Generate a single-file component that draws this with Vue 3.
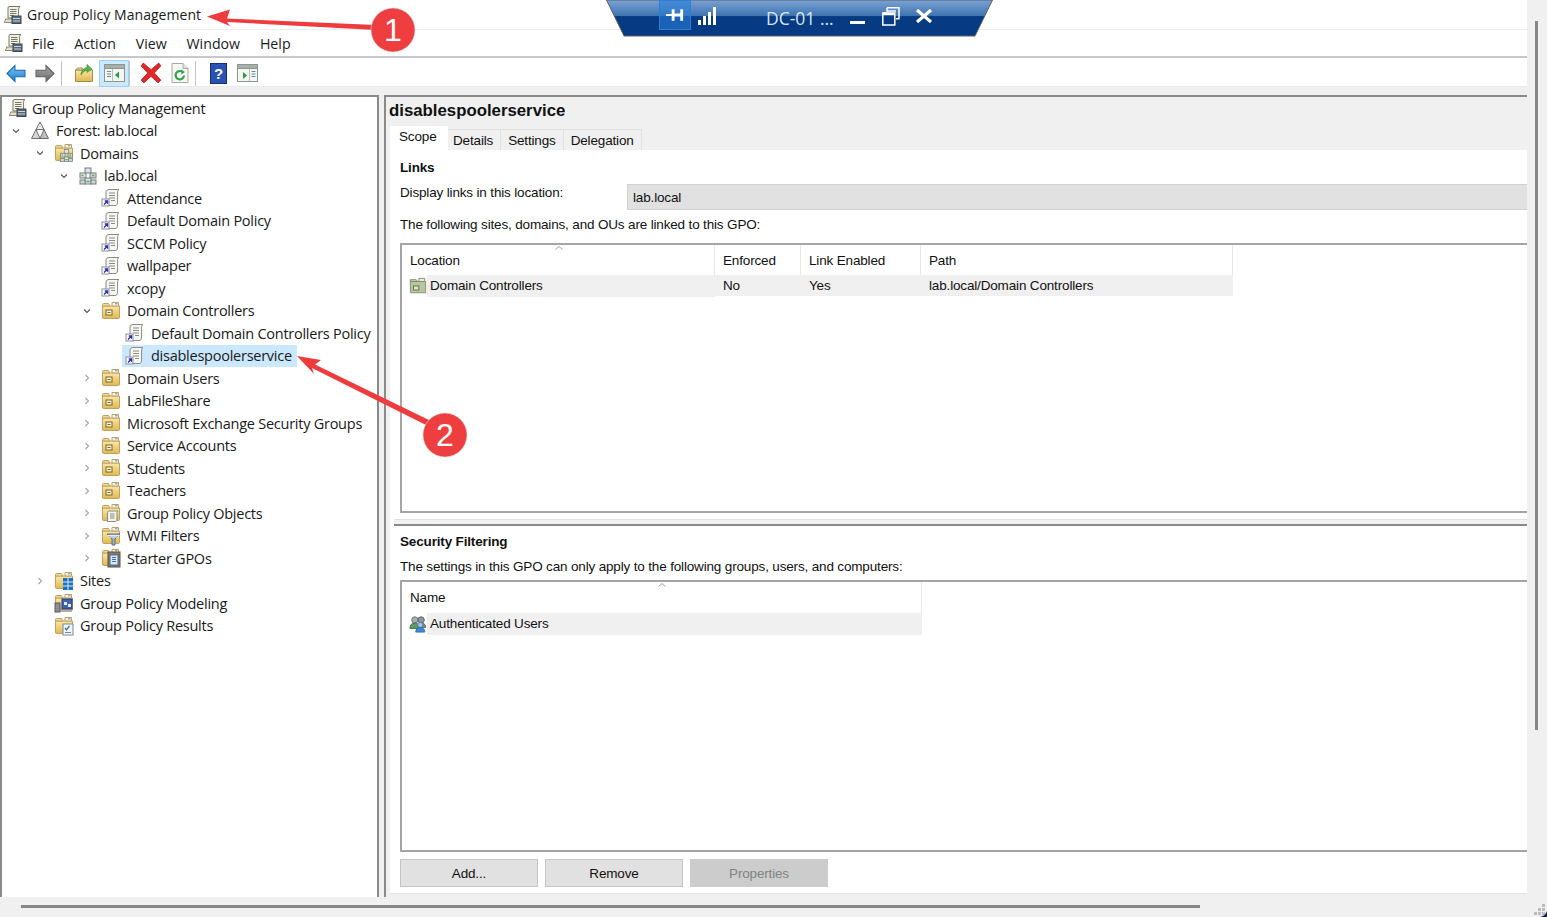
<script setup>
const menus = ["File", "Action", "View", "Window", "Help"];

const tree = [
  { level: 0, icon: "gpmc", label: "Group Policy Management" },
  { level: 1, chevron: "open", icon: "forest", label: "Forest: lab.local" },
  { level: 2, chevron: "open", icon: "domains", label: "Domains" },
  { level: 3, chevron: "open", icon: "domain", label: "lab.local" },
  { level: 4, icon: "gpo", label: "Attendance" },
  { level: 4, icon: "gpo", label: "Default Domain Policy" },
  { level: 4, icon: "gpo", label: "SCCM Policy" },
  { level: 4, icon: "gpo", label: "wallpaper" },
  { level: 4, icon: "gpo", label: "xcopy" },
  { level: 4, chevron: "open", icon: "ou", label: "Domain Controllers" },
  { level: 5, icon: "gpo", label: "Default Domain Controllers Policy" },
  { level: 5, icon: "gpo", label: "disablespoolerservice", selected: true },
  { level: 4, chevron: "closed", icon: "ou", label: "Domain Users" },
  { level: 4, chevron: "closed", icon: "ou", label: "LabFileShare" },
  { level: 4, chevron: "closed", icon: "ou", label: "Microsoft Exchange Security Groups" },
  { level: 4, chevron: "closed", icon: "ou", label: "Service Accounts" },
  { level: 4, chevron: "closed", icon: "ou", label: "Students" },
  { level: 4, chevron: "closed", icon: "ou", label: "Teachers" },
  { level: 4, chevron: "closed", icon: "gpofolder", label: "Group Policy Objects" },
  { level: 4, chevron: "closed", icon: "wmi", label: "WMI Filters" },
  { level: 4, chevron: "closed", icon: "starter", label: "Starter GPOs" },
  { level: 2, chevron: "closed", icon: "sites", label: "Sites" },
  { level: 2, icon: "modeling", label: "Group Policy Modeling" },
  { level: 2, icon: "results", label: "Group Policy Results" },
];

const tabs = ["Details", "Settings", "Delegation"];
</script>

<template>
  <div class="window">
    <svg class="sprite" aria-hidden="true">
      <defs>
        <linearGradient id="folderFill" x1="0" y1="0" x2="0" y2="1">
          <stop offset="0" stop-color="#fae7a6" />
          <stop offset="1" stop-color="#e0b850" />
        </linearGradient>
        <linearGradient id="backFill" x1="0" y1="0" x2="0" y2="1">
          <stop offset="0" stop-color="#7cc4f5" />
          <stop offset="1" stop-color="#1a7fd0" />
        </linearGradient>
        <linearGradient id="fwdFill" x1="0" y1="0" x2="0" y2="1">
          <stop offset="0" stop-color="#a8a8a8" />
          <stop offset="1" stop-color="#6c6c6c" />
        </linearGradient>
        <symbol id="scroll" viewBox="0 0 20 20">
          <path d="M6 1.500h11c-1 .6-1.400 1.400-1.400 2.500v9H5V3c0-.8.400-1.300 1-1.500z" fill="#f5f1e0" stroke="#77776c" />
          <path d="M7 4.500h6.500M7 6.500h6.500M7 8.500h6.500M7 10.500h4" stroke="#77776c" />
        </symbol>
        <symbol id="i-gpmc" viewBox="0 0 20 20">
          <use href="#scroll" />
          <path d="M1 17c1-.5 1.500-1.500 1.500-3h15v3.500H2z" fill="#e7dfc4" stroke="#8a8670" />
          <rect x="9" y="11" width="9" height="7.500" fill="#59697a" stroke="#3c4855" />
          <path d="M10 13.500h7M10 16h7" stroke="#c9d4dd" />
        </symbol>
        <symbol id="i-forest" viewBox="0 0 20 20">
          <path d="M10 1l4 7.500H6z" fill="#e8e8e8" stroke="#6f6f6f" />
          <path d="M6 8.500l4 9H1.500z" fill="#d6d6d6" stroke="#6f6f6f" />
          <path d="M14 8.500l4.500 9H10z" fill="#bfbfbf" stroke="#6f6f6f" />
        </symbol>
        <symbol id="server" viewBox="0 0 20 20">
          <rect x="7" y="2" width="6" height="5" fill="#dfe3e3" stroke="#76807f" />
          <rect x="2" y="7" width="6" height="5" fill="#dfe3e3" stroke="#76807f" />
          <rect x="12" y="7" width="6" height="5" fill="#cfd6d6" stroke="#76807f" />
          <rect x="7" y="12" width="6" height="6" fill="#dfe3e3" stroke="#76807f" />
          <rect x="2" y="14" width="5" height="4" fill="#cfd6d6" stroke="#76807f" />
          <rect x="13" y="14" width="5" height="4" fill="#cfd6d6" stroke="#76807f" />
          <path d="M8.500 15.500h3M3.500 9.500h2M14 9.500h2" stroke="#49b04a" stroke-width="1.500" />
        </symbol>
        <symbol id="folder" viewBox="0 0 20 20">
          <path d="M1.500 5V16.500c0 .6.400 1 1 1h15c.6 0 1-.4 1-1V5z" fill="url(#folderFill)" stroke="#bda264" />
          <path d="M1.500 5V3.500c0-.6.400-1 1-1h5l1.500 2.500z" fill="#f3d98f" stroke="#bda264" />
          <path d="M11 1.500h6.500v3.500H11z" fill="#f8f4e6" stroke="#bda264" />
          <path d="M14 2.800h2.500" stroke="#4d96c9" />
        </symbol>
        <symbol id="i-domains" viewBox="0 0 20 20">
          <use href="#folder" />
          <svg x="5" y="5" width="15" height="15" viewBox="0 0 20 20"><use href="#server" /></svg>
        </symbol>
        <symbol id="i-domain" viewBox="0 0 20 20">
          <use href="#server" />
        </symbol>
        <symbol id="i-gpo" viewBox="0 0 20 20">
          <path d="M8 1.500h10c-.9.500-1.400 1.200-1.400 2.300V14c0 1.500-.6 3-1.600 3.500H5V4C5 2.500 6.500 1.500 8 1.500z" fill="#f6f6f2" stroke="#8b8b83" />
          <path d="M8 5h6M8 7.500h6M8 10h6M10 12.500h4" stroke="#8b8b83" />
          <rect x="1" y="11" width="7" height="7" fill="#fff" stroke="#8b8ba0" />
          <path d="M3 16.500l3-3M3.800 13h2.700v2.700" fill="none" stroke="#2b2bb0" stroke-width="1.300" />
        </symbol>
        <symbol id="i-ou" viewBox="0 0 20 20">
          <use href="#folder" />
          <rect x="5" y="9" width="6" height="5" fill="#fff6d8" stroke="#7a6526" />
          <path d="M6.500 11.500h3" stroke="#7a6526" />
        </symbol>
        <symbol id="i-gpofolder" viewBox="0 0 20 20">
          <use href="#folder" />
          <path d="M8 8h9c-.7.400-1 1-1 1.700V16c0 1-.5 2-1.200 2.500H6.500V9.500C6.500 8.700 7.200 8 8 8z" fill="#f3f3ee" stroke="#8b8b83" />
          <path d="M9 11h4.500M9 13h4.500M9 15h4.500" stroke="#8b8b83" />
        </symbol>
        <symbol id="i-wmi" viewBox="0 0 20 20">
          <use href="#folder" />
          <path d="M6 8h13l-5 5v6h-3v-6z" fill="#9fb0bf" stroke="#5f6f7d" />
          <path d="M6.500 9.500h12M8 11h9" stroke="#e8eef3" />
        </symbol>
        <symbol id="i-starter" viewBox="0 0 20 20">
          <use href="#folder" />
          <rect x="7" y="4" width="12" height="15" fill="#8a7a66" stroke="#5d5044" />
          <rect x="9" y="7" width="8" height="10" fill="#dfe9f4" stroke="#3e6ea6" />
          <path d="M11 9.500h4M11 11.500h4M11 13.500h4" stroke="#3e6ea6" />
        </symbol>
        <symbol id="i-sites" viewBox="0 0 20 20">
          <use href="#folder" />
          <rect x="9" y="7" width="10" height="12" fill="#1873c4" />
          <path d="M9 11h10M9 15h10M14 7v12" stroke="#d8ecfb" />
        </symbol>
        <symbol id="i-modeling" viewBox="0 0 20 20">
          <use href="#folder" />
          <rect x="1" y="10" width="5" height="9" fill="#8c8f93" stroke="#565a5e" />
          <rect x="8" y="6" width="10" height="10" fill="#3a62b5" stroke="#2a3f77" />
          <path d="M10 9h3v3h-3zM14 11h3v3h-3z" fill="#e5eefc" />
          <path d="M7 17h11v2H7z" fill="#a9adb2" />
        </symbol>
        <symbol id="i-results" viewBox="0 0 20 20">
          <use href="#folder" />
          <rect x="9" y="8" width="10" height="11" fill="#f2f5f8" stroke="#7f8894" />
          <path d="M11 12l1.500 2 3-4" fill="none" stroke="#2f7abf" stroke-width="1.300" />
          <path d="M11 16.500h6" stroke="#7f8894" />
        </symbol>
        <symbol id="i-oulink" viewBox="0 0 20 20">
          <path d="M1.500 5V17.500h17V5z" fill="#b9c7a0" stroke="#7c8a6a" />
          <path d="M1.500 5V3h6.500l1.500 2z" fill="#c8d4b0" stroke="#7c8a6a" />
          <path d="M11 1.500h6.500v3.500H11z" fill="#e8ecd8" stroke="#7c8a6a" />
          <rect x="5" y="10" width="6" height="4.500" fill="#dfe6c9" stroke="#5e6a4d" />
        </symbol>
        <symbol id="i-users" viewBox="0 0 20 20">
          <circle cx="6.500" cy="5.500" r="3.500" fill="#a7adb0" stroke="#6a7074" />
          <path d="M1 15c0-4 2-6 5.500-6s4.500 2 4.500 6z" fill="#5c9a63" stroke="#3c7345" />
          <circle cx="13.500" cy="5.500" r="3.500" fill="#8f969a" stroke="#5b6165" />
          <path d="M10 12c0-2 1.500-3 3.500-3s5 1 5 4v1h-8.500z" fill="#7b8286" stroke="#5b6165" />
          <circle cx="12.500" cy="11" r="2.800" fill="#9fc6e8" stroke="#4d83b8" />
          <path d="M7.500 19c0-3.500 2-5 5-5s5 1.500 5 5z" fill="#3b8ad6" stroke="#2a6eb2" />
        </symbol>
      </defs>
    </svg>

    <div class="main">
      <header class="titlebar">
        <svg class="ico title-ico"><use href="#i-gpmc" /></svg>
        <span>Group Policy Management</span>
      </header>

      <nav class="menubar">
        <svg class="ico menu-ico"><use href="#i-gpmc" /></svg>
        <span v-for="menu in menus" :key="menu" class="menu-item">{{ menu }}</span>
      </nav>

      <div class="toolbar">
        <svg class="tool tool-nav" viewBox="0 0 20 18" preserveAspectRatio="none">
          <path d="M1 9l8-7.500V6h10v6H9v4.500z" fill="url(#backFill)" stroke="#1768ad" />
        </svg>
        <svg class="tool tool-nav" viewBox="0 0 20 18" preserveAspectRatio="none">
          <path d="M19 9l-8-7.500V6H1v6h10v4.500z" fill="url(#fwdFill)" stroke="#5f5f5f" />
        </svg>
        <i class="tool-sep first-sep"></i>
        <svg class="tool tool-up" viewBox="0 0 20 20">
          <path d="M1.500 7h17v11.500h-17z" fill="url(#folderFill)" stroke="#a98f4e" />
          <path d="M1.500 7l2-2h5l1 2z" fill="#f3d98f" stroke="#a98f4e" />
          <path d="M7 12c0-4 3-7 6-7.500V1.500l5 4.500-5 3.500V7c-2 .5-4 2-6 5z" fill="#55b649" stroke="#2f8a2d" stroke-width=".6" />
        </svg>
        <span class="tool-active">
          <svg class="tool tool-win" viewBox="0 0 21 18">
            <rect x=".5" y=".5" width="20" height="17" fill="#f4f6f4" stroke="#8d9590" />
            <rect x=".5" y=".5" width="20" height="4" fill="#a8b0ab" stroke="#8d9590" />
            <path d="M3 7.500h4M3 10h4M3 12.500h4" stroke="#6a8a96" />
            <path d="M8.500 5v12.500" stroke="#b7bfba" />
            <path d="M11 11l4-3.500v7z" fill="#2f9a3b" />
          </svg>
        </span>
        <i class="tool-sep"></i>
        <svg class="tool tool-del" viewBox="0 0 20 20">
          <path d="M3 1l7 6 7-6 2 2.500-6 6.500 6 6.500-2.500 2.500L10 13l-6.500 6L1 16.500 7 10 1 3.500z" fill="#e3282a" stroke="#a81c1f" stroke-width=".7" />
        </svg>
        <svg class="tool tool-ref" viewBox="0 0 18 20">
          <path d="M1 .5h11l5 5v14H1z" fill="#f7f7f5" stroke="#a8a8a8" />
          <path d="M12 .5v5h5" fill="#e6e6e6" stroke="#a8a8a8" />
          <path d="M13 12.500A4.200 4.200 0 1 1 11.500 9" fill="none" stroke="#34a343" stroke-width="2.200" />
          <path d="M10 6.500l4 2.500-3.500 2.500z" fill="#34a343" />
        </svg>
        <i class="tool-sep help-sep"></i>
        <svg class="tool tool-help" viewBox="0 0 17 21">
          <rect x=".5" y=".5" width="16" height="20" fill="#2a52b4" stroke="#18306e" />
          <text x="8.500" y="16" text-anchor="middle" class="help-mark">?</text>
        </svg>
        <svg class="tool tool-view" viewBox="0 0 21 18">
          <rect x=".5" y=".5" width="20" height="17" fill="#f4f6f4" stroke="#8d9590" />
          <rect x=".5" y=".5" width="20" height="4" fill="#a8b0ab" stroke="#8d9590" />
          <path d="M6 8l4 3.500-4 3.500z" fill="#2f9a3b" />
          <path d="M12.500 5v12.500" stroke="#b7bfba" />
          <path d="M14.500 7.500h4M14.500 10h4M14.500 12.500h4" stroke="#6a8a96" />
        </svg>
      </div>

      <div class="panes">
        <aside class="tree">
          <div v-for="node in tree" :key="node.label" class="node" :class="'level-' + node.level">
            <span class="chevron-slot">
              <svg v-if="node.chevron" class="chevron" :class="node.chevron" viewBox="0 0 8 8">
                <path v-if="node.chevron === 'open'" d="M1 2.500l3 3 3-3" />
                <path v-else d="M2.500 1l3 3-3 3" />
              </svg>
            </span>
            <span class="node-body" :class="{ selected: node.selected }">
              <svg class="ico node-ico"><use :href="'#i-' + node.icon" /></svg>
              <span class="node-label">{{ node.label }}</span>
            </span>
          </div>
        </aside>

        <section class="detail">
          <h1>disablespoolerservice</h1>
          <div class="tabs">
            <span class="tab active">Scope</span>
            <span v-for="tab in tabs" :key="tab" class="tab">{{ tab }}</span>
          </div>

          <div class="tab-body">
            <div class="section-title links-title">Links</div>
            <div class="location-row">
              <span class="location-label">Display links in this location:</span>
              <span class="location-box">lab.local</span>
            </div>
            <div class="hint">The following sites, domains, and OUs are linked to this GPO:</div>

            <div class="list links-list">
              <div class="list-grid">
                <div class="head-cell first">Location<svg class="sort" viewBox="0 0 8 4"><path d="M.5 3.500L4 .5l3.500 3" /></svg></div>
                <div class="head-cell">Enforced</div>
                <div class="head-cell">Link Enabled</div>
                <div class="head-cell">Path</div>
                <div class="row-cell name-cell">
                  <svg class="ico row-ico"><use href="#i-oulink" /></svg>
                  <span class="row-name">Domain Controllers</span>
                </div>
                <div class="row-cell">No</div>
                <div class="row-cell">Yes</div>
                <div class="row-cell">lab.local/Domain Controllers</div>
              </div>
            </div>

            <div class="splitter"></div>

            <div class="section-title security-title">Security Filtering</div>
            <div class="hint security-hint">The settings in this GPO can only apply to the following groups, users, and computers:</div>

            <div class="list security-list">
              <div class="list-grid security-grid">
                <div class="head-cell first">Name<svg class="sort name-sort" viewBox="0 0 8 4"><path d="M.5 3.500L4 .5l3.500 3" /></svg></div>
                <div class="row-cell name-cell">
                  <svg class="ico row-ico"><use href="#i-users" /></svg>
                  <span class="row-name">Authenticated Users</span>
                </div>
              </div>
            </div>

            <div class="buttons">
              <button type="button" class="btn">Add...</button>
              <button type="button" class="btn">Remove</button>
              <button type="button" class="btn" disabled>Properties</button>
            </div>
          </div>
        </section>
      </div>
    </div>

    <div class="vscroll"><i></i></div>
    <div class="hscroll"><i></i></div>
    <div class="corner">
      <svg viewBox="0 0 14 14" class="grip">
        <path d="M9 1h3v3H9zM5 5h3v3H5zM9 5h3v3H9zM1 9h3v3H1zM5 9h3v3H5zM9 9h3v3H9z" fill="#bdbdbd" />
        <path d="M14 8v6H7c3-.5 6-2.500 7-6z" fill="#16233f" />
      </svg>
    </div>

    <!-- connection bar from the remote session, sits over the title bar -->
    <div class="rdp">
      <svg class="rdp-shape" viewBox="0 0 387 37">
        <defs>
          <linearGradient id="rdpFill" x1="0" y1="0" x2="0" y2="1">
            <stop offset="0" stop-color="#7ba3d4" />
            <stop offset=".44" stop-color="#3e74b0" />
            <stop offset=".46" stop-color="#063b84" />
            <stop offset="1" stop-color="#063b84" />
          </linearGradient>
        </defs>
        <path d="M.5 0L18 36h351L386.500 0z" fill="url(#rdpFill)" stroke="#5a5f66" />
      </svg>
      <div class="rdp-content">
        <span class="rdp-pin">
          <svg viewBox="0 0 20 14"><path d="M0 6h6v2H0zM6 1h3v12H6zM9 5.500h6v3H9zM15 1h3v12h-3z" fill="#fff" /></svg>
        </span>
        <svg class="rdp-signal" viewBox="0 0 19 19"><path d="M0 13h3v5H0zM5 9h3v9H5zM10 5h3v13h-3zM15 0h3v18h-3z" fill="#fff" /></svg>
        <span class="rdp-name">DC-01 ...</span>
        <span class="rdp-min"></span>
        <svg class="rdp-restore" viewBox="0 0 18 19">
          <path d="M5 .8h12v11h-3M5 .8v4" fill="none" stroke="#fff" stroke-width="1.500" />
          <path d="M5 4h9M4 6h-3" stroke="#fff" stroke-width="1.500" />
          <rect x=".8" y="6" width="12" height="12" fill="none" stroke="#fff" stroke-width="1.500" />
          <path d="M1 7h11.500" stroke="#fff" stroke-width="2" />
        </svg>
        <svg class="rdp-close" viewBox="0 0 18 14"><path d="M2 1l14 12M16 1L2 13" stroke="#fff" stroke-width="3.200" /></svg>
      </div>
    </div>

    <!-- annotation arrows drawn on top of the capture -->
    <svg class="annotations" viewBox="0 0 1547 917">
      <path d="M207 16.500L230 9.500L227 18.500L376 25L376 30L227 22L230 26z" fill="#ee3b3d" />
      <circle cx="393" cy="30" r="22" fill="#ef3e3f" stroke="#d9d9d9" stroke-width=".6" />
      <text x="393" y="41" text-anchor="middle" class="badge-num">1</text>
      <path d="M297 356L321 360L315 364.500L431 421L428 426L312 368L314 374z" fill="#ee3b3d" />
      <circle cx="445" cy="435" r="22" fill="#ef3e3f" stroke="#d9d9d9" stroke-width=".6" />
      <text x="445" y="446" text-anchor="middle" class="badge-num">2</text>
    </svg>
  </div>
</template>

<style scoped>
.window {
  position: relative;
  width: 100%;
  height: 100vh;
  min-height: 917px;
  overflow: hidden;
  display: grid;
  grid-template-columns: 1fr 20px;
  grid-template-rows: 1fr 20px;
  background: #f0f0f0;
  color: #1a1a1a;
  font-family: "Open Sans", "Noto Sans", sans-serif;
}
.sprite {
  position: absolute;
  width: 0;
  height: 0;
}
.main {
  min-width: 0;
  min-height: 0;
  display: flex;
  flex-direction: column;
  background: #fff;
}
.ico {
  display: block;
  flex: none;
  width: 20px;
  height: 20px;
}
.titlebar {
  height: 29px;
  flex: none;
  display: flex;
  align-items: center;
  gap: 4px;
  padding-left: 3px;
  border-bottom: 1px solid #ececec;
  font-size: 14px;
  letter-spacing: 0.05px;
}
.menubar {
  height: 26px;
  flex: none;
  display: flex;
  align-items: center;
  padding-left: 4px;
  border-bottom: 2px solid #c8c8cc;
  font-size: 14.2px;
}
.menu-ico {
  margin-right: 8px;
}
.menu-item {
  margin-right: 19.8px;
}
.toolbar {
  height: 29px;
  box-sizing: border-box;
  flex: none;
  display: flex;
  align-items: center;
  padding: 2px 0 0 6px;
  border-bottom: 1px solid #eaeaea;
}
.tool {
  display: block;
  flex: none;
}
.tool-nav {
  width: 20px;
  height: 19px;
  margin-right: 9px;
}
.tool-sep {
  width: 1px;
  height: 25px;
  flex: none;
  background: #c4c4c4;
}
.first-sep {
  margin: 0 12px 0 -3px;
}
.tool-up {
  width: 20px;
  height: 20px;
  margin-right: 5px;
}
.tool-active {
  width: 30px;
  height: 27px;
  box-sizing: border-box;
  flex: none;
  display: flex;
  align-items: center;
  justify-content: center;
  background: #cce8ff;
  border: 1px solid #99d1ff;
}
.tool-win,
.tool-view {
  width: 21px;
  height: 18px;
}
.tool-del {
  width: 22px;
  height: 22px;
  margin: 0 9px 0 10px;
}
.tool-ref {
  width: 18px;
  height: 20px;
}
.help-sep {
  margin: 0 14px 0 6px;
}
.tool-help {
  width: 17px;
  height: 21px;
  margin-right: 10px;
}
.help-mark {
  fill: #fff;
  font: bold 15px "Liberation Sans", sans-serif;
}
.panes {
  flex: 1;
  min-height: 0;
  display: flex;
  margin-top: 8px;
  background: #f0f0f0;
  box-shadow: 0 -8px 0 #f0f0f0;
}
.tree {
  width: 379px;
  box-sizing: border-box;
  flex: none;
  background: #fff;
  border: solid #8a8a8a;
  border-width: 2px 2px 0 2px;
  font-size: 14.5px;
  letter-spacing: -0.25px;
}
.node {
  height: 22.5px;
  display: flex;
  align-items: center;
}
.chevron-slot {
  width: 10px;
  flex: none;
  display: flex;
  justify-content: center;
}
.chevron {
  width: 8px;
  height: 8px;
  fill: none;
  stroke: #555;
  stroke-width: 1.1;
}
.chevron.closed {
  stroke: #a6a6a6;
}
.level-0 .chevron-slot {
  width: 4px;
}
.level-1 {
  padding-left: 9px;
}
.level-2 {
  padding-left: 33px;
}
.level-3 {
  padding-left: 57px;
}
.level-4 {
  padding-left: 80px;
}
.level-5 {
  padding-left: 104px;
}
.node-body {
  display: flex;
  align-items: center;
  height: 22.5px;
  padding: 0 5px 0 3px;
  margin-left: 6px;
  gap: 6px;
}
.level-0 .node-body {
  margin-left: 0;
  padding-left: 2px;
  gap: 4px;
}
.node-ico {
  width: 20px;
  height: 20px;
}
.node-label {
  white-space: nowrap;
}
.selected {
  background: #cce8ff;
}
.detail {
  flex: 1;
  min-width: 0;
  margin-left: 5px;
  display: flex;
  flex-direction: column;
  border: solid #8a8a8a;
  border-width: 2px 0 0 2px;
  font-family: "Liberation Sans", Arial, sans-serif;
  font-size: 13.5px;
  letter-spacing: -0.16px;
  color: #111;
}
.detail h1 {
  height: 30px;
  flex: none;
  margin: 0;
  padding: 4px 0 0 3px;
  box-sizing: border-box;
  font-size: 16.8px;
  line-height: 20px;
  font-weight: 700;
  letter-spacing: 0;
  color: #111;
}
.tabs {
  height: 23px;
  flex: none;
  display: flex;
  align-items: flex-end;
  padding-left: 4px;
}
.tab {
  height: 21px;
  box-sizing: border-box;
  padding: 0 7px;
  line-height: 21px;
  background: #f0f0f0;
  border: solid #e0e0e0;
  border-width: 1px 1px 0 0;
}
.tab.active {
  height: 24px;
  line-height: 22px;
  width: 58px;
  padding: 0 0 0 9px;
  background: #fff;
  border: 0;
}
.tab.active + .tab {
  padding-left: 5px;
}
.tab-body {
  flex: 1;
  min-height: 0;
  margin: 0 0 3px 4px;
  padding-left: 10px;
  display: flex;
  flex-direction: column;
  background: #fff;
  border-bottom: 1px solid #e3e3e3;
}
.section-title {
  height: 16px;
  flex: none;
  line-height: 16px;
  font-weight: 700;
}
.links-title {
  margin-top: 10px;
}
.location-row {
  height: 26px;
  flex: none;
  display: flex;
  margin-top: 8px;
}
.location-label {
  width: 227px;
  flex: none;
  padding-top: 1px;
  line-height: 16px;
}
.location-box {
  flex: 1;
  padding-left: 5px;
  line-height: 25px;
  background: #e1e1e1;
  border: solid #d2d2d2;
  border-width: 1px 0 1px 1px;
  box-sizing: border-box;
}
.hint {
  height: 16px;
  flex: none;
  margin-top: 7px;
  line-height: 16px;
  white-space: nowrap;
}
.list {
  flex: none;
  box-sizing: border-box;
  background: #fff;
  border: solid #a5a5a8;
  border-width: 2px 0 2px 2px;
}
.links-list {
  height: 270px;
  margin-top: 10px;
}
.security-list {
  height: 272px;
  margin-top: 5px;
}
.list-grid {
  display: grid;
  grid-template-columns: 313px 86px 120px 312px;
  grid-template-rows: 30px 21px;
  width: max-content;
}
.security-grid {
  grid-template-columns: 520px;
  grid-template-rows: 31px 21px;
}
.head-cell {
  position: relative;
  padding: 3px 0 0 8px;
  line-height: 26px;
  border-right: 1px solid #e8e8e8;
}
.sort {
  position: absolute;
  top: 1px;
  left: 153px;
  width: 8px;
  height: 4px;
  fill: none;
  stroke: #a4a4a4;
}
.name-sort {
  left: 256px;
}
.row-cell {
  padding-left: 8px;
  line-height: 22px;
  background: #f0f0f0;
}
.name-cell {
  display: flex;
  align-items: center;
  padding-left: 7px;
  background: none;
}
.row-ico {
  width: 18px;
  height: 18px;
}
.row-name {
  flex: 1;
  padding-left: 3px;
  line-height: 22px;
  background: #f0f0f0;
}
.splitter {
  height: 7px;
  flex: none;
  margin: 6px 0 0 -6px;
  box-sizing: border-box;
  background: #f2f2f2;
  border-top: 1px solid #e0e0e0;
  border-bottom: 2px solid #8a8a8a;
}
.security-title {
  margin-top: 8px;
}
.security-hint {
  margin-top: 9px;
}
.buttons {
  display: flex;
  gap: 7px;
  margin-top: 7px;
}
.btn {
  width: 138px;
  height: 28px;
  padding: 0;
  background: #e1e1e1;
  border: 1px solid #c4c4c4;
  font: 13.5px "Liberation Sans", Arial, sans-serif;
  letter-spacing: -0.16px;
  color: #111;
}
.btn:disabled {
  background: #cccccc;
  border-color: #cccccc;
  color: #838383;
}
.vscroll {
  padding: 21px 0 0 8px;
}
.vscroll i {
  display: block;
  width: 3px;
  height: 709px;
  background: #868686;
}
.hscroll {
  padding: 8px 0 0 21px;
}
.hscroll i {
  display: block;
  width: 1179px;
  height: 3px;
  background: #868686;
}
.corner {
  display: flex;
  align-items: flex-end;
  justify-content: flex-end;
}
.grip {
  width: 14px;
  height: 14px;
}
.rdp {
  position: absolute;
  top: 0;
  left: 606px;
  width: 387px;
  height: 37px;
}
.rdp-shape {
  position: absolute;
  inset: 0;
  width: 387px;
  height: 37px;
}
.rdp-content {
  position: relative;
  height: 36px;
  display: flex;
  padding-left: 53px;
  align-items: flex-start;
}
.rdp-pin {
  width: 32px;
  height: 30px;
  flex: none;
  display: flex;
  align-items: center;
  justify-content: center;
  box-sizing: border-box;
  background: rgba(40, 125, 215, 0.6);
  border: 1px solid #2e7fd4;
}
.rdp-pin svg {
  width: 19px;
  height: 14px;
}
.rdp-signal {
  width: 19px;
  height: 19px;
  flex: none;
  margin: 7px 0 0 7px;
}
.rdp-name {
  width: 84px;
  flex: none;
  margin: 7px 0 0 49px;
  font-size: 17.5px;
  line-height: 22px;
  color: #d8e6f5;
}
.rdp-min {
  width: 15px;
  height: 3px;
  flex: none;
  margin: 21px 0 0 0;
  background: #fff;
}
.rdp-restore {
  width: 18px;
  height: 19px;
  flex: none;
  margin: 7px 0 0 17px;
}
.rdp-close {
  width: 18px;
  height: 14px;
  flex: none;
  margin: 9px 0 0 15px;
}
.annotations {
  position: absolute;
  top: 0;
  left: 0;
  width: 1547px;
  height: 917px;
  pointer-events: none;
}
.badge-num {
  fill: #fff;
  font: 32px "Liberation Sans", Arial, sans-serif;
}
</style>
